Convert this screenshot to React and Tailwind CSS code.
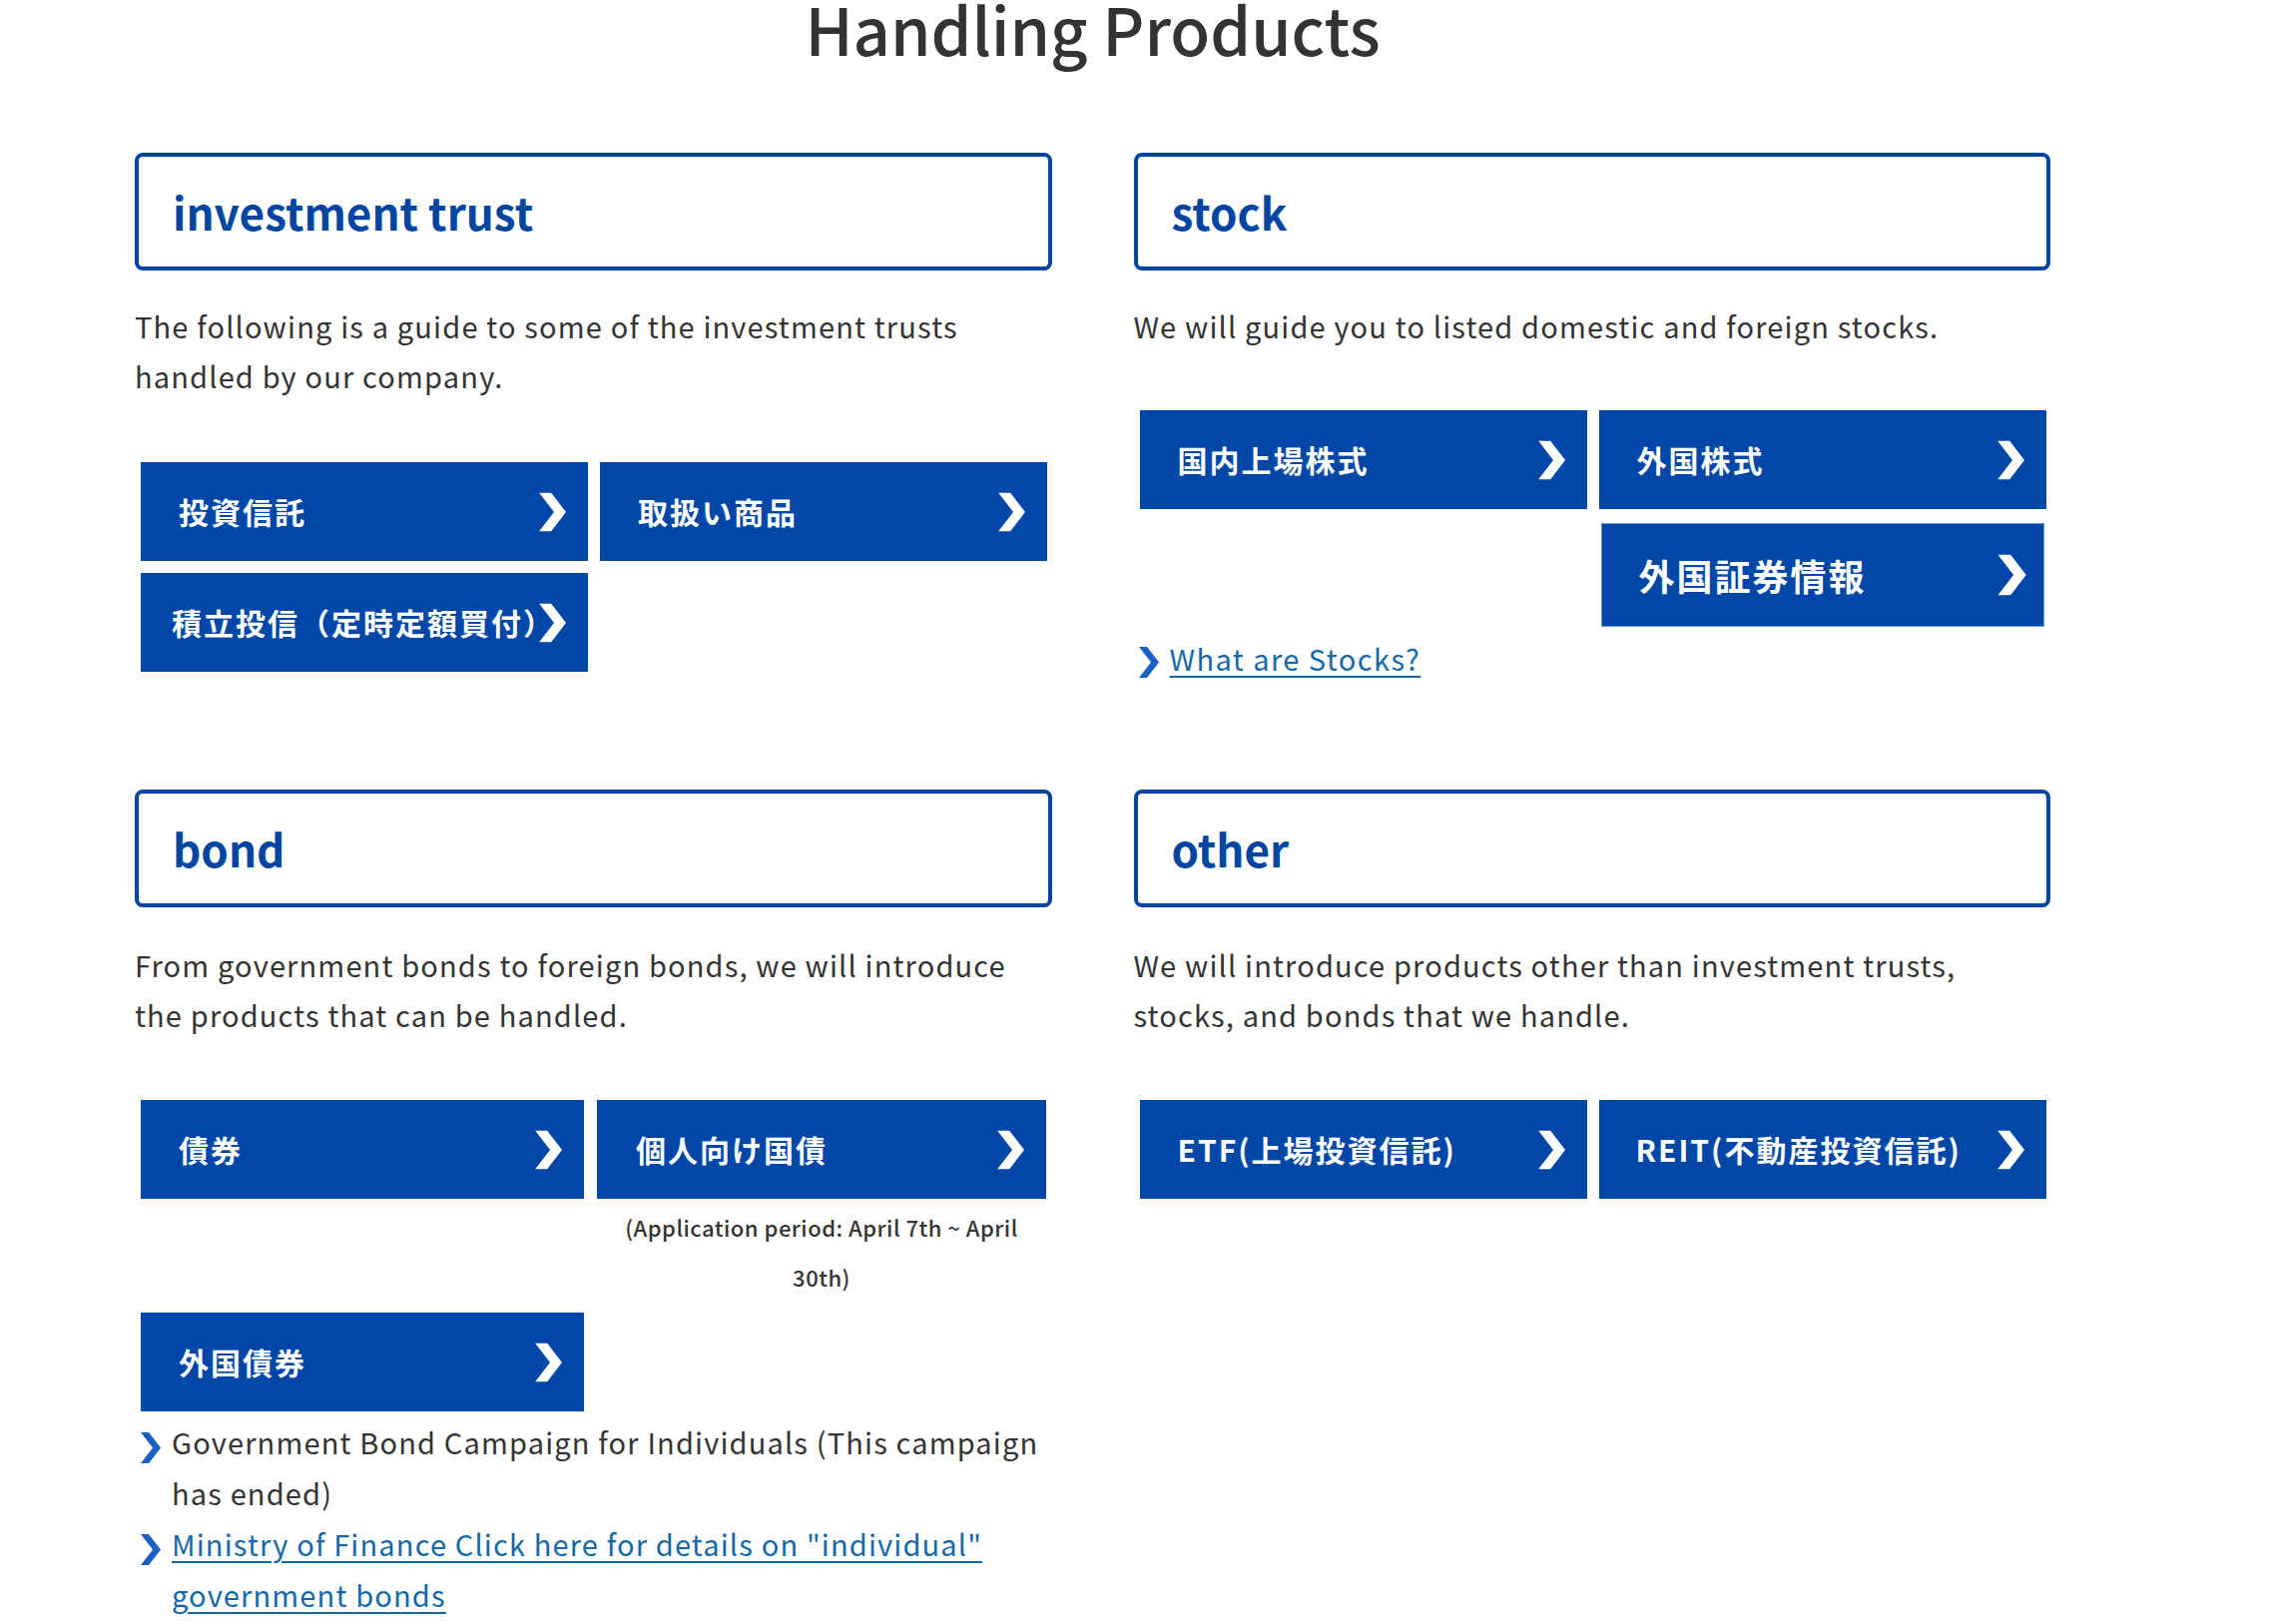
function Chevron({ className = '' }) {
  return (
    <svg viewBox="0 0 27 39" className={className} aria-hidden="true">
      <polygon points="0,0 12,0 27,19.5 12,39 0,39 15,19.5" fill="currentColor" />
    </svg>
  );
}

function LinkChevron({ className = '' }) {
  return (
    <svg viewBox="0 0 20 31" className={`w-[20px] h-[31px] shrink-0 text-[#1a5fc4] ${className}`} aria-hidden="true">
      <polygon points="0,0 8,0 20,15.5 8,31 0,31 12,15.5" fill="currentColor" />
    </svg>
  );
}

function NavButton({ label, textClass = 'pl-[38px]' }) {
  return (
    <a
      href="#"
      className="relative flex items-center h-[99px] bg-[#0047a7] text-white font-bold text-[30px] tracking-[2px] whitespace-nowrap overflow-hidden"
    >
      <span className={textClass}>{label}</span>
      <Chevron className="absolute right-[22px] top-1/2 -translate-y-1/2 w-[27px] h-[39px]" />
    </a>
  );
}

function SectionTitle({ children }) {
  return (
    <div className="h-[118px] border-4 border-[#0046a0] rounded-[8px] flex items-center pl-[34px]">
      <h3 className="text-[44px] font-bold text-[#0046a0] leading-none">{children}</h3>
    </div>
  );
}

export default function App() {
  return (
    <div className="min-h-[1627px] bg-white text-[#333] font-['Noto_Sans_CJK_JP','Noto_Sans',sans-serif] overflow-hidden">
      <div className="ml-[135px] w-[1919px]">
        <h2 className="mt-[-4px] text-center text-[65px] leading-[65px] font-medium text-[#333]">
          Handling Products
        </h2>

        <div className="mt-[92px] grid grid-cols-2 gap-x-[82px] gap-y-[107px] items-start">
          {/* investment trust */}
          <section>
            <SectionTitle>investment trust</SectionTitle>
            <p className="mt-[30px] text-[29px] leading-[50px] tracking-[0.04em]">
              The following is a guide to some of the investment trusts handled by our company.
            </p>
            <div className="mt-[62px] ml-[6px] w-[908px] grid grid-cols-2 gap-[12px]">
              <NavButton label="投資信託" />
              <NavButton label="取扱い商品" />
              <NavButton label="積立投信（定時定額買付）" textClass="pl-[31px]" />
            </div>
          </section>

          {/* stock */}
          <section>
            <SectionTitle>stock</SectionTitle>
            <p className="mt-[30px] text-[29px] leading-[50px] tracking-[0.04em]">
              We will guide you to listed domestic and foreign stocks.
            </p>
            <div className="mt-[60px] ml-[6px] w-[908px] grid grid-cols-2 gap-x-[12px] gap-y-[14px]">
              <NavButton label="国内上場株式" />
              <NavButton label="外国株式" />
              <a
                href="#"
                className="col-start-2 mx-[2px] relative flex items-center h-[104px] bg-[#0047a7] border border-[#6f93cf] text-white font-bold text-[36px] tracking-[2px] whitespace-nowrap"
              >
                <span className="pl-[37px]">外国証券情報</span>
                <Chevron className="absolute right-[17px] top-1/2 -translate-y-1/2 w-[29px] h-[41px]" />
              </a>
            </div>
            <p className="mt-[6px] ml-[5px] flex items-start gap-[11px] text-[29px] leading-[50px] tracking-[0.05em]">
              <LinkChevron className="mt-[14px]" />
              <a href="#" className="text-[#1467a8] underline underline-offset-[5px] decoration-[2px]">
                What are Stocks?
              </a>
            </p>
          </section>

          {/* bond */}
          <section>
            <SectionTitle>bond</SectionTitle>
            <p className="mt-[32px] text-[29px] leading-[50px] tracking-[0.04em]">
              From government bonds to foreign bonds, we will introduce the products that can be handled.
            </p>
            <div className="mt-[61px] ml-[6px] grid grid-cols-[444px_450px] gap-x-[13px] gap-y-[11px] items-start">
              <NavButton label="債券" />
              <div>
                <NavButton label="個人向け国債" textClass="pl-[39px]" />
                <p className="pt-[3px] px-[20px] text-center text-[22px] leading-[50px] font-medium tracking-[0.5px] text-[#333]">
                  (Application period: April 7th ~ April 30th)
                </p>
              </div>
              <NavButton label="外国債券" />
            </div>
            <ul className="mt-[5px] ml-[6px] text-[29px] leading-[51px] tracking-[0.04em]">
              <li className="flex items-start gap-[11px]">
                <LinkChevron className="mt-[16px]" />
                <span>Government Bond Campaign for Individuals (This campaign has ended)</span>
              </li>
              <li className="flex items-start gap-[11px]">
                <LinkChevron className="mt-[16px]" />
                <a href="#" className="text-[#1467a8] underline underline-offset-[5px] decoration-[2px]">
                  Ministry of Finance Click here for details on "individual" government bonds
                </a>
              </li>
            </ul>
          </section>

          {/* other */}
          <section>
            <SectionTitle>other</SectionTitle>
            <p className="mt-[32px] text-[29px] leading-[50px] tracking-[0.04em]">
              We will introduce products other than investment trusts, stocks, and bonds that we handle.
            </p>
            <div className="mt-[61px] ml-[6px] w-[908px] grid grid-cols-2 gap-[12px]">
              <NavButton label="ETF(上場投資信託)" />
              <NavButton label="REIT(不動産投資信託)" textClass="pl-[37px]" />
            </div>
          </section>
        </div>
      </div>
    </div>
  );
}
